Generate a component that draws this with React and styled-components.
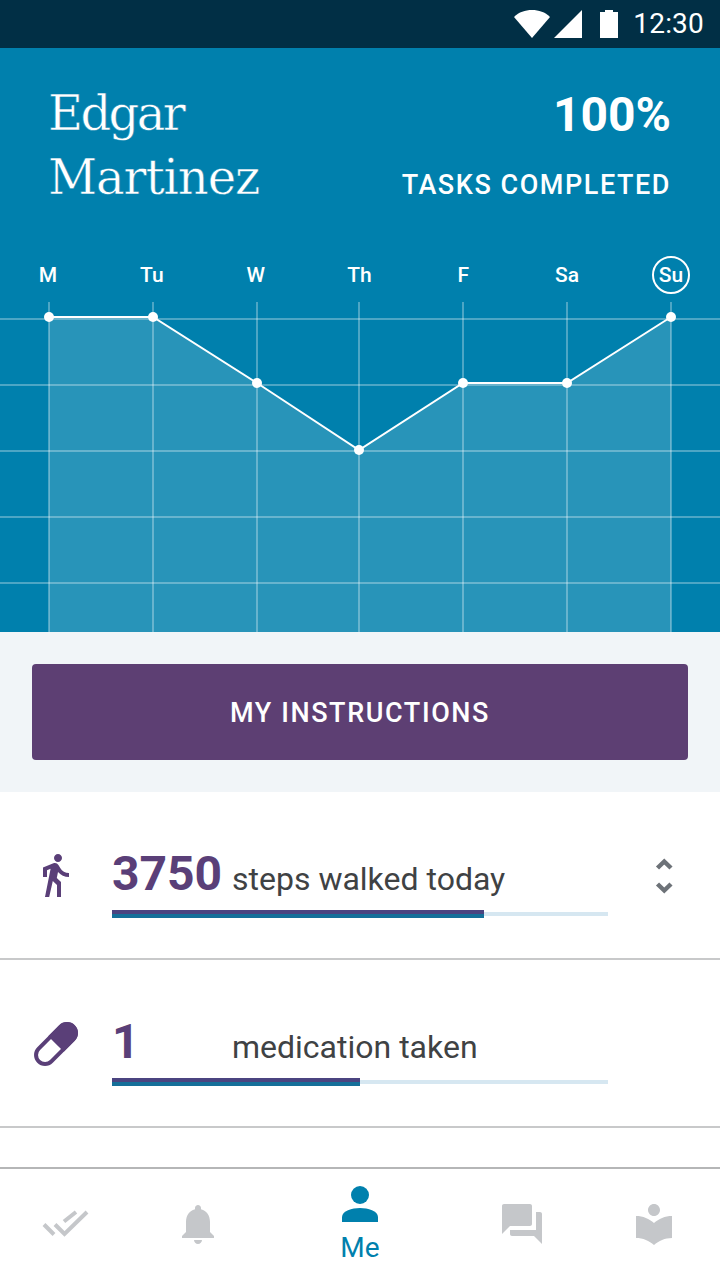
import React from 'react'
import styled, { createGlobalStyle } from 'styled-components'

const Global = createGlobalStyle`
  html, body { margin: 0; padding: 0; background: #fff; }
  body { font-family: Roboto, "Liberation Sans", sans-serif; }
  * { box-sizing: border-box; }
`

const Screen = styled.div`
  width: 720px;
  height: 1280px;
  overflow: hidden;
  display: flex;
  flex-direction: column;
  background: #fff;
`

const StatusBar = styled.div`
  height: 48px;
  flex: none;
  background: #012f45;
  display: flex;
  align-items: center;
  justify-content: flex-end;
  padding-right: 16px;
  color: #fff;
`

const StatusIcons = styled.svg`
  display: block;
  margin-right: 15px;
`

const Clock = styled.div`
  font-size: 28px;
  line-height: 48px;
  letter-spacing: 0.2px;
`

const Hero = styled.div`
  flex: none;
  height: 584px;
  background: #0080ad;
  color: #fff;
  display: flex;
  flex-direction: column;
`

const HeroTop = styled.div`
  height: 204px;
  padding: 33px 49px 0 48px;
  display: flex;
  justify-content: space-between;
`

const NameLine = styled.div`
  font-family: "DejaVu Serif", "Liberation Serif", serif;
  font-size: 48px;
  line-height: 64px;
  letter-spacing: ${p => p.$spacing}px;
  -webkit-text-stroke: 0.5px #0080ad;
`

const Score = styled.div`
  text-align: right;
`

const Percent = styled.div`
  font-size: 48px;
  font-weight: 700;
  line-height: 56px;
  margin-top: 6px;
`

const ScoreLabel = styled.div`
  font-size: 27px;
  font-weight: 500;
  line-height: 32px;
  letter-spacing: 1.55px;
  margin-top: 26px;
`

const Days = styled.div`
  height: 50px;
  padding: 0 30px 0 29px;
  display: flex;
  justify-content: space-between;
  align-items: flex-start;
`

const Day = styled.div`
  width: 38px;
  height: 38px;
  margin-top: 4px;
  padding-bottom: 1px;
  display: flex;
  align-items: center;
  justify-content: center;
  font-size: 21px;
  font-weight: 500;
  border-radius: 50%;
  border: 2px solid ${p => (p.$today ? '#fff' : 'transparent')};
`

const Chart = styled.svg`
  display: block;
  flex: none;
`

const ButtonBand = styled.div`
  flex: none;
  height: 160px;
  padding: 32px;
  background: #f1f5f8;
`

const PrimaryButton = styled.button`
  width: 100%;
  height: 96px;
  padding: 2px 0 0;
  border: 0;
  border-radius: 4px;
  background: #5d3f73;
  color: #fff;
  font-family: inherit;
  font-size: 27px;
  font-weight: 500;
  letter-spacing: 1.6px;
`

const Row = styled.div`
  flex: none;
  height: 168px;
  border-bottom: 2px solid #c8c9ca;
  display: grid;
  grid-template-columns: 112px 496px 1fr;
`

const RowIcon = styled.div`
  display: flex;
  justify-content: center;
  padding-top: ${p => p.$top}px;
  padding-right: ${p => p.$shift || 0}px;
`

const RowBody = styled.div`
  padding-top: 52px;
`

const Metric = styled.div`
  display: flex;
  align-items: baseline;
  height: 66px;
`

const MetricValue = styled.div`
  width: 120px;
  font-size: 48px;
  font-weight: 700;
  line-height: 60px;
  color: #5a3f78;
`

const MetricLabel = styled.div`
  font-size: 32px;
  line-height: 60px;
  color: #3f4244;
`

const Track = styled.div`
  position: relative;
  height: 4px;
  margin-top: 2px;
  background: #d6e7f1;
`

const Fill = styled.div`
  position: absolute;
  left: 0;
  top: -2px;
  height: 8px;
  background: linear-gradient(#4b4480 50%, #156f99 50%);
`

const Expand = styled.div`
  padding: 65px 0 0 47px;
`

const Spacer = styled.div`
  flex: 1;
`

const Nav = styled.nav`
  flex: none;
  height: 113px;
  border-top: 2px solid #b5b6b7;
  display: flex;
  background: #fff;
`

const NavItem = styled.div`
  flex: 0 0 ${p => (p.$active ? 192 : 132)}px;
  display: flex;
  flex-direction: column;
  align-items: center;
  justify-content: center;
  padding: ${p => (p.$active ? '1px 0 0' : '0 0 1px')};
  color: ${p => (p.$active ? '#0080ad' : '#c5c7ca')};
`

const NavLabel = styled.div`
  font-size: 28px;
  line-height: 32px;
  margin-top: 10px;
`

const xs = [49, 153, 257, 359, 463, 567, 671]
const ys = [15, 15, 81, 148, 81, 81, 15]
const hLines = [17, 83, 149, 215, 281]
const days = ['M', 'Tu', 'W', 'Th', 'F', 'Sa', 'Su']

function WeekChart () {
  const line = xs.map((x, i) => `${x},${ys[i]}`).join(' ')
  return (
    <Chart width='720' height='330' viewBox='0 0 720 330'>
      <polygon points={`49,330 ${line} 671,330`} fill='#fff' fillOpacity='0.155' />
      {hLines.map(y => <line key={y} x1='0' x2='720' y1={y} y2={y} stroke='#fff' strokeOpacity='0.3' strokeWidth='2' />)}
      {xs.map(x => <line key={x} x1={x} x2={x} y1='0' y2='330' stroke='#fff' strokeOpacity='0.3' strokeWidth='2' />)}
      <polyline points={line} fill='none' stroke='#fff' strokeWidth='2' />
      {xs.map((x, i) => <circle key={x} cx={x} cy={ys[i]} r='5' fill='#fff' />)}
    </Chart>
  )
}

const Walk = () => (
  <svg width='48' height='48' viewBox='0 0 24 24' fill='#5a3f78'>
    <path d='M13.5 5.5c1.1 0 2-.9 2-2s-.9-2-2-2-2 .9-2 2 .9 2 2 2zM9.8 8.9L7 23h2.1l1.8-8 2.1 2v6h2v-7.5l-2.1-2 .6-3C14.8 12 16.8 13 19 13v-2c-1.9 0-3.5-1-4.3-2.4l-1-1.6c-.4-.6-1-1-1.7-1-.3 0-.5.1-.8.1L6 8.3V13h2V9.6l1.8-.7' />
  </svg>
)

const Pill = () => (
  <svg width='44' height='44' viewBox='0 0 44 44'>
    <g transform='rotate(-45 22 22)'>
      <rect x='-2.5' y='13' width='49' height='18' rx='9' fill='none' stroke='#5a3f78' strokeWidth='4' />
      <path d='M22 11h15.500a11 11 0 0 1 0 22H22z' fill='#5a3f78' />
    </g>
  </svg>
)

const Chevrons = () => (
  <svg width='20' height='38' viewBox='0 0 20 38' fill='none' stroke='#6d7278' strokeWidth='4.5'>
    <polyline points='2.500,11 9.250,4.500 16,11' />
    <polyline points='2.500,27 9.250,33.500 16,27' />
  </svg>
)

const DoubleCheck = () => (
  <svg width='48' height='28' viewBox='0 0 48 28' fill='none' stroke='currentColor' strokeWidth='4'>
    <path d='M2 14.5l10 10M13 14.5l9.5 9.500L45 2M22 11.500L34 2' />
  </svg>
)

const Bell = () => (
  <svg width='48' height='48' viewBox='0 0 24 24' fill='currentColor'>
    <path d='M12 22c1.100 0 2-.9 2-2h-4c0 1.100.9 2 2 2zm6-6v-5c0-3.070-1.630-5.640-4.500-6.320V4c0-.83-.67-1.500-1.500-1.500s-1.500.67-1.500 1.500v.68C7.640 5.360 6 7.920 6 11v5l-2 2v1h16v-1l-2-2z' />
  </svg>
)

const Person = () => (
  <svg width='36' height='36' viewBox='0 0 36 36' fill='currentColor'>
    <circle cx='18' cy='9' r='9' />
    <path d='M0 36v-5c0-6 10-9 18-9s18 3 18 9v5z' />
  </svg>
)

const Forum = () => (
  <svg width='48' height='48' viewBox='0 0 24 24' fill='currentColor'>
    <path d='M21 6h-2v9H6v2c0 .55.45 1 1 1h11l4 4V7c0-.55-.45-1-1-1zm-4 6V3c0-.55-.45-1-1-1H3c-.55 0-1 .45-1 1v14l4-4h10c.55 0 1-.45 1-1z' />
  </svg>
)

const Library = () => (
  <svg width='48' height='48' viewBox='0 0 24 24' fill='currentColor'>
    <path d='M12 11.550C9.640 9.350 6.480 8 3 8v11c3.480 0 6.640 1.350 9 3.550 2.360-2.190 5.520-3.550 9-3.550V8c-3.480 0-6.640 1.350-9 3.550zM12 8c1.660 0 3-1.340 3-3s-1.340-3-3-3-3 1.340-3 3 1.340 3 3 3z' />
  </svg>
)

export default function App () {
  return (
    <Screen>
      <Global />
      <StatusBar>
        <StatusIcons width='104' height='30' viewBox='0 0 104 30' fill='#fff'>
          <path d='M0 8C5 3 11 1 18 1s13 2 18 7L18 29z' />
          <path d='M40 29L68 1v28z' />
          <path d='M86 3h5V1h8v2h5v26H86z' />
        </StatusIcons>
        <Clock>12:30</Clock>
      </StatusBar>

      <Hero>
        <HeroTop>
          <div>
            <NameLine $spacing={-2.6}>Edgar</NameLine>
            <NameLine $spacing={-1.1}>Martinez</NameLine>
          </div>
          <Score>
            <Percent>100%</Percent>
            <ScoreLabel>TASKS COMPLETED</ScoreLabel>
          </Score>
        </HeroTop>
        <Days>
          {days.map(d => <Day key={d} $today={d === 'Su'}>{d}</Day>)}
        </Days>
        <WeekChart />
      </Hero>

      <ButtonBand>
        <PrimaryButton>MY INSTRUCTIONS</PrimaryButton>
      </ButtonBand>

      <Row>
        <RowIcon $top={59} $shift={3}><Walk /></RowIcon>
        <RowBody>
          <Metric>
            <MetricValue>3750</MetricValue>
            <MetricLabel>steps walked today</MetricLabel>
          </Metric>
          <Track><Fill style={{ width: '75%' }} /></Track>
        </RowBody>
        <Expand><Chevrons /></Expand>
      </Row>

      <Row>
        <RowIcon $top={62}><Pill /></RowIcon>
        <RowBody>
          <Metric>
            <MetricValue>1</MetricValue>
            <MetricLabel>medication taken</MetricLabel>
          </Metric>
          <Track><Fill style={{ width: '50%' }} /></Track>
        </RowBody>
      </Row>

      <Spacer />

      <Nav>
        <NavItem><DoubleCheck /></NavItem>
        <NavItem><Bell /></NavItem>
        <NavItem $active><Person /><NavLabel>Me</NavLabel></NavItem>
        <NavItem><Forum /></NavItem>
        <NavItem><Library /></NavItem>
      </Nav>
    </Screen>
  )
}
